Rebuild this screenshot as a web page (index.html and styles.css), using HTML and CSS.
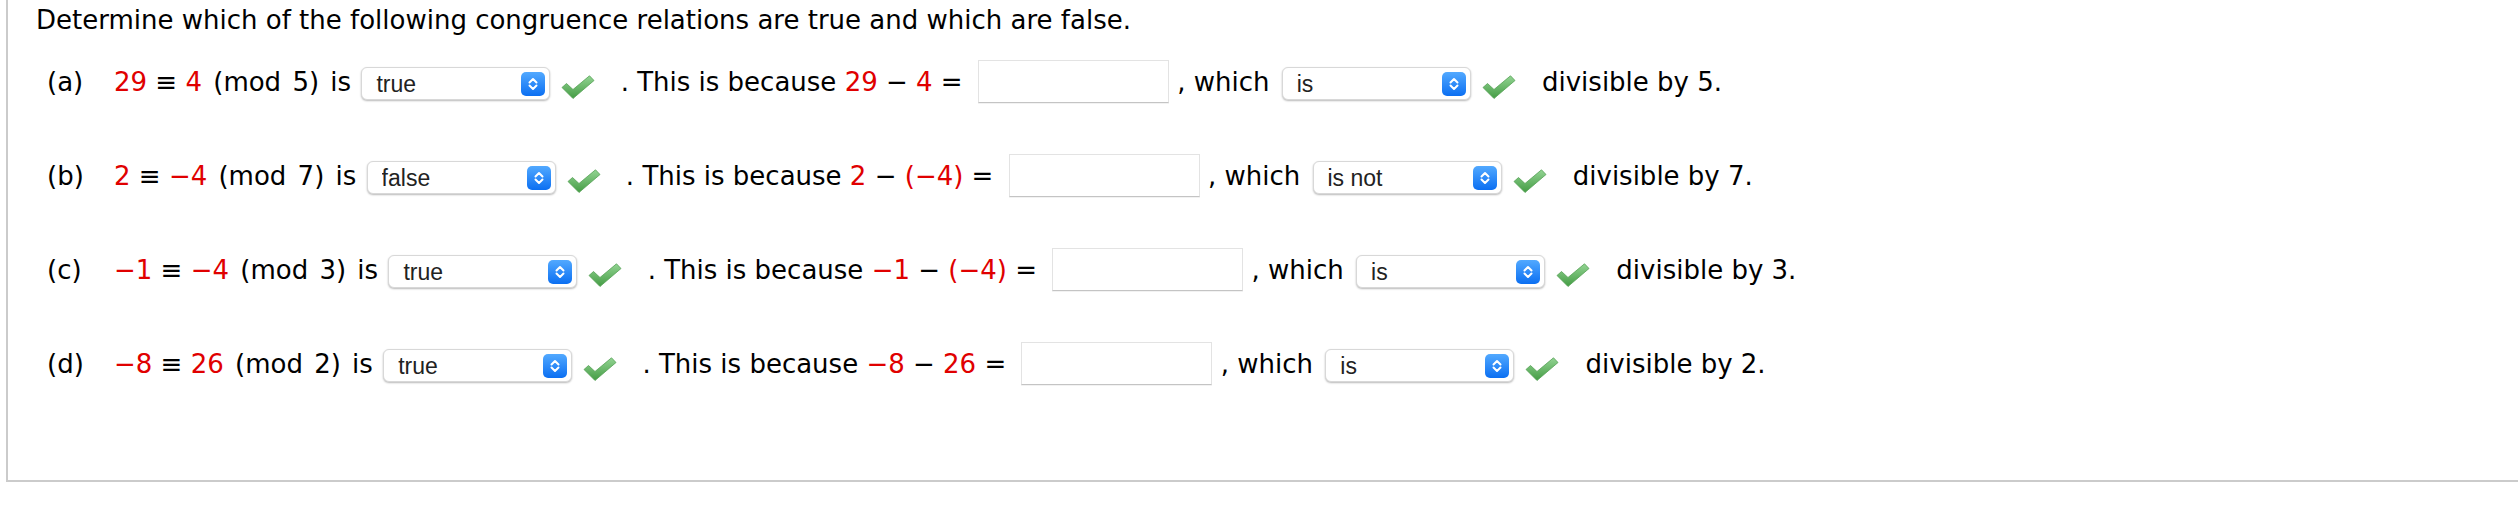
FILE: index.html
```html
<!DOCTYPE html>
<html>
<head>
<meta charset="utf-8">
<title>Congruence relations</title>
<link rel="stylesheet" href="styles.css">
</head>
<body>
<svg class="defs" width="0" height="0" aria-hidden="true">
  <defs>
    <linearGradient id="gchk" x1="0" y1="0" x2="0" y2="1">
      <stop offset="0" stop-color="#93d493"/>
      <stop offset="1" stop-color="#449c44"/>
    </linearGradient>
    <symbol id="chk" viewBox="0 0 34 24">
      <polygon points="1,12.5 5.5,8.5 12,14.5 28.5,0.8 33,5.5 12,23.5" fill="url(#gchk)" stroke="#56a156" stroke-width="0.8" stroke-linejoin="round"/>
    </symbol>
    <symbol id="arr" viewBox="0 0 24 24">
      <polyline points="8.5,10.5 12,7 15.5,10.5" fill="none" stroke="#fff" stroke-width="2" stroke-linecap="round" stroke-linejoin="round"/>
      <polyline points="8.5,13.5 12,17 15.5,13.5" fill="none" stroke="#fff" stroke-width="2" stroke-linecap="round" stroke-linejoin="round"/>
    </symbol>
  </defs>
</svg>
<div class="box">
  <div class="title">Determine which of the following congruence relations are true and which are false.</div>

  <div class="row"><span class="lbl">(a)</span><span class="r">29</span> ≡ <span class="r">4</span> <span class="mod">(mod 5) is</span> <span class="sel q1"><select><option>true</option></select><span class="btn"><svg><use href="#arr"/></svg></span></span><svg class="check"><use href="#chk"/></svg> . This is because <span class="r">29</span> − <span class="r">4</span> = <input class="ans" type="text"> , which <span class="sel"><select><option>is</option></select><span class="btn"><svg><use href="#arr"/></svg></span></span><svg class="check c2"><use href="#chk"/></svg> divisible by 5.</div>

  <div class="row"><span class="lbl">(b)</span><span class="r">2</span> ≡ <span class="r">−4</span> <span class="mod">(mod 7) is</span> <span class="sel q1"><select><option>false</option></select><span class="btn"><svg><use href="#arr"/></svg></span></span><svg class="check"><use href="#chk"/></svg> . This is because <span class="r">2</span> − <span class="r">(−4)</span> = <input class="ans" type="text"> , which <span class="sel"><select><option>is not</option></select><span class="btn"><svg><use href="#arr"/></svg></span></span><svg class="check c2"><use href="#chk"/></svg> divisible by 7.</div>

  <div class="row"><span class="lbl">(c)</span><span class="r">−1</span> ≡ <span class="r">−4</span> <span class="mod">(mod 3) is</span> <span class="sel q1"><select><option>true</option></select><span class="btn"><svg><use href="#arr"/></svg></span></span><svg class="check"><use href="#chk"/></svg> . This is because <span class="r">−1</span> − <span class="r">(−4)</span> = <input class="ans" type="text"> , which <span class="sel"><select><option>is</option></select><span class="btn"><svg><use href="#arr"/></svg></span></span><svg class="check c2"><use href="#chk"/></svg> divisible by 3.</div>

  <div class="row"><span class="lbl">(d)</span><span class="r">−8</span> ≡ <span class="r">26</span> <span class="mod">(mod 2) is</span> <span class="sel q1"><select><option>true</option></select><span class="btn"><svg><use href="#arr"/></svg></span></span><svg class="check"><use href="#chk"/></svg> . This is because <span class="r">−8</span> − <span class="r">26</span> = <input class="ans" type="text"> , which <span class="sel"><select><option>is</option></select><span class="btn"><svg><use href="#arr"/></svg></span></span><svg class="check c2"><use href="#chk"/></svg> divisible by 2.</div>
</div>
</body>
</html>
```

FILE: styles.css
```css
html, body {
  margin: 0;
  padding: 0;
  background: #fff;
  overflow: hidden;
}

body {
  font-family: "DejaVu Sans", Verdana, sans-serif;
  font-size: 26px;
  color: #000;
}

.defs {
  display: block;
  width: 0;
  height: 0;
}

.box {
  margin-left: 6px;
  height: 480px;
  border-left: 2px solid #cbcbcb;
  border-bottom: 2px solid #cbcbcb;
  padding-left: 28px;
}

.title {
  line-height: 40px;
  margin-bottom: 12px;
  white-space: nowrap;
}

.row {
  line-height: 60px;
  margin-bottom: 34px;
  padding-left: 11px;
  white-space: nowrap;
}

.lbl {
  display: inline-block;
  width: 67px;
}

.r {
  color: #e00000;
}

.mod {
  margin-left: 3px;
  word-spacing: 3px;
}

.sel {
  display: inline-block;
  position: relative;
  vertical-align: middle;
  width: 189px;
  height: 33px;
  margin-left: 4px;
}

.sel.q1 {
  margin-left: 2px;
}

.sel select {
  -webkit-appearance: none;
  appearance: none;
  display: block;
  box-sizing: border-box;
  width: 189px;
  height: 33px;
  margin: 0;
  padding: 0 0 0 14px;
  border: 1px solid #d8d8d8;
  border-radius: 6px;
  background: #fff;
  box-shadow: 0 1px 2px rgba(0, 0, 0, 0.28);
  font-family: "Liberation Sans", Arial, sans-serif;
  font-size: 23px;
  color: #222;
  outline: none;
}

.btn {
  position: absolute;
  right: 5px;
  top: 5px;
  width: 24px;
  height: 24px;
  border-radius: 5px;
  background: linear-gradient(#52a9ff, #0b6ff2);
  pointer-events: none;
}

.btn svg {
  display: block;
  width: 24px;
  height: 24px;
}

.check {
  width: 34px;
  height: 24px;
  margin-left: 11px;
  margin-right: 17px;
  vertical-align: -8px;
}

.check.c2 {
  margin-right: 18px;
}

.ans {
  box-sizing: border-box;
  width: 191px;
  height: 43px;
  margin: 0 0 4px 7px;
  padding: 0;
  vertical-align: middle;
  border: 1px solid #e3e3e3;
  border-bottom-color: #c4c4c4;
  background: #fff;
  box-shadow: 0 1px 0 rgba(0, 0, 0, 0.05);
  outline: none;
}
```
